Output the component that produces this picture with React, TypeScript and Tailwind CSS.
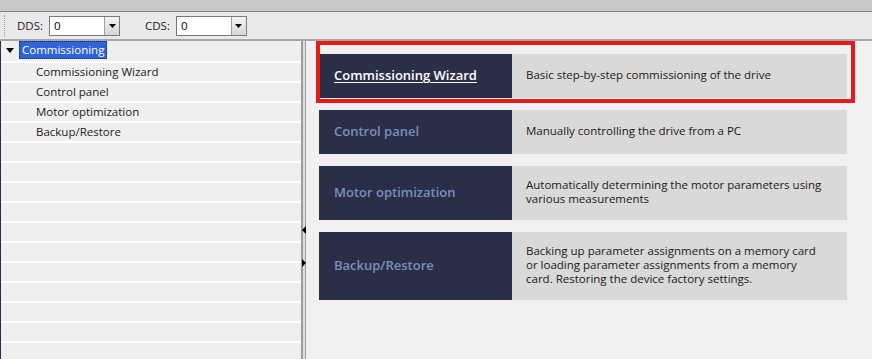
import React from "react";

const font = { fontFamily: '"Open Sans", "Noto Sans", sans-serif' };

const tree = [
  "Commissioning Wizard",
  "Control panel",
  "Motor optimization",
  "Backup/Restore",
];

const cards = [
  {
    title: "Commissioning Wizard",
    text: "Basic step-by-step commissioning of the drive",
    h: "h-[44px]",
    active: true,
  },
  {
    title: "Control panel",
    text: "Manually controlling the drive from a PC",
    h: "h-[44px]",
  },
  {
    title: "Motor optimization",
    text: "Automatically determining the motor parameters using various measurements",
    h: "h-[54px]",
  },
  {
    title: "Backup/Restore",
    text: "Backing up parameter assignments on a memory card or loading parameter assignments from a memory card. Restoring the device factory settings.",
    h: "h-[68px]",
  },
];

function Select({ label }: { label: string }) {
  return (
    <div className="flex items-center gap-[6px]">
      <span className="text-[11.5px] text-[#1e1e1e]">{label}</span>
      <div className="flex h-[20px] w-[71px] border border-[#7a7a7a] bg-white">
        <span className="flex-1 pl-[4px] text-[11.5px] leading-[18px] text-black">0</span>
        <div className="flex w-[15px] items-center justify-center border-l border-[#a0a0a0] bg-gradient-to-b from-[#f4f4f4] to-[#d6d6d6]">
          <svg width="7" height="4" viewBox="0 0 7 4">
            <path d="M0 0h7L3.5 4z" fill="#000" />
          </svg>
        </div>
      </div>
    </div>
  );
}

export default function App() {
  return (
    <div className="flex h-[359px] w-[872px] flex-col overflow-hidden bg-[#f0f0f0]" style={font}>
      <div className="h-[12px] border-b border-[#858585] bg-[#cacaca]" />
      <div className="flex h-[27px] items-center bg-[#e9e9e9]">
        <div className="ml-[4px] h-[22px] border-l border-dotted border-[#9a9a9a]" />
        <div className="ml-[12px] flex items-center gap-[25px]">
          <Select label="DDS:" />
          <Select label="CDS:" />
        </div>
      </div>
      <div className="h-[2px] bg-[#a6a6a6]" />
      <div className="flex flex-1">
        {/* tree */}
        <div className="w-[301px] border-l border-[#2a2f47] bg-[#efefef]">
          <div className="flex h-[22px] items-center border-b-2 border-white pb-[2px]">
            <svg className="ml-[5px]" width="8" height="5" viewBox="0 0 8 5">
              <path d="M0 0h8L4 5z" fill="#000" />
            </svg>
            <span className="ml-[5px] border border-dotted border-[#0c2a80] bg-[#3063d4] px-[2px] text-[11.5px] leading-[16px] text-white">
              Commissioning
            </span>
          </div>
          {tree.map((t) => (
            <div key={t} className="flex h-[20px] items-center border-b-2 border-white pl-[35px] text-[11.5px] text-[#1a1a1a]">
              {t}
            </div>
          ))}
          {Array.from({ length: 10 }).map((_, i) => (
            <div key={i} className="h-[20px] border-b-2 border-white" />
          ))}
        </div>
        {/* splitter */}
        <div className="relative flex w-[6px]">
          <div className="w-[2px] bg-[#9c9c9c]" />
          <div className="w-[2px] bg-[#dcdcdc]" />
          <div className="w-[1px] bg-[#9c9c9c]" />
          <svg className="absolute left-[1px] top-[185px]" width="4" height="8" viewBox="0 0 4 8">
            <path d="M4 0v8L0 4z" fill="#000" />
          </svg>
          <svg className="absolute left-[1px] top-[218px]" width="4" height="8" viewBox="0 0 4 8">
            <path d="M0 0v8l4-4z" fill="#000" />
          </svg>
        </div>
        {/* content */}
        <div className="relative flex-1 pl-[12px] pt-[13px]">
          <div className="flex flex-col gap-[12px]">
            {cards.map((c) => (
              <div key={c.title} className={`flex w-[528px] ${c.h}`}>
                <div className="flex w-[193px] items-center bg-[#2a2f47] pl-[15px]">
                  <span
                    className={`text-[13px] font-semibold ${
                      c.active ? "text-white underline underline-offset-2" : "text-[#7b8dbf]"
                    }`}
                  >
                    {c.title}
                  </span>
                </div>
                <div className="flex flex-1 items-center bg-[#d9d9d9] pb-[2px] pl-[14px]">
                  <p className="w-[300px] text-[11.5px] leading-[14px] text-[#1a1a1a]">{c.text}</p>
                </div>
              </div>
            ))}
          </div>
          <div className="absolute left-[9px] top-0 h-[62px] w-[539px] border-4 border-[#e31b1b]" />
        </div>
      </div>
    </div>
  );
}
